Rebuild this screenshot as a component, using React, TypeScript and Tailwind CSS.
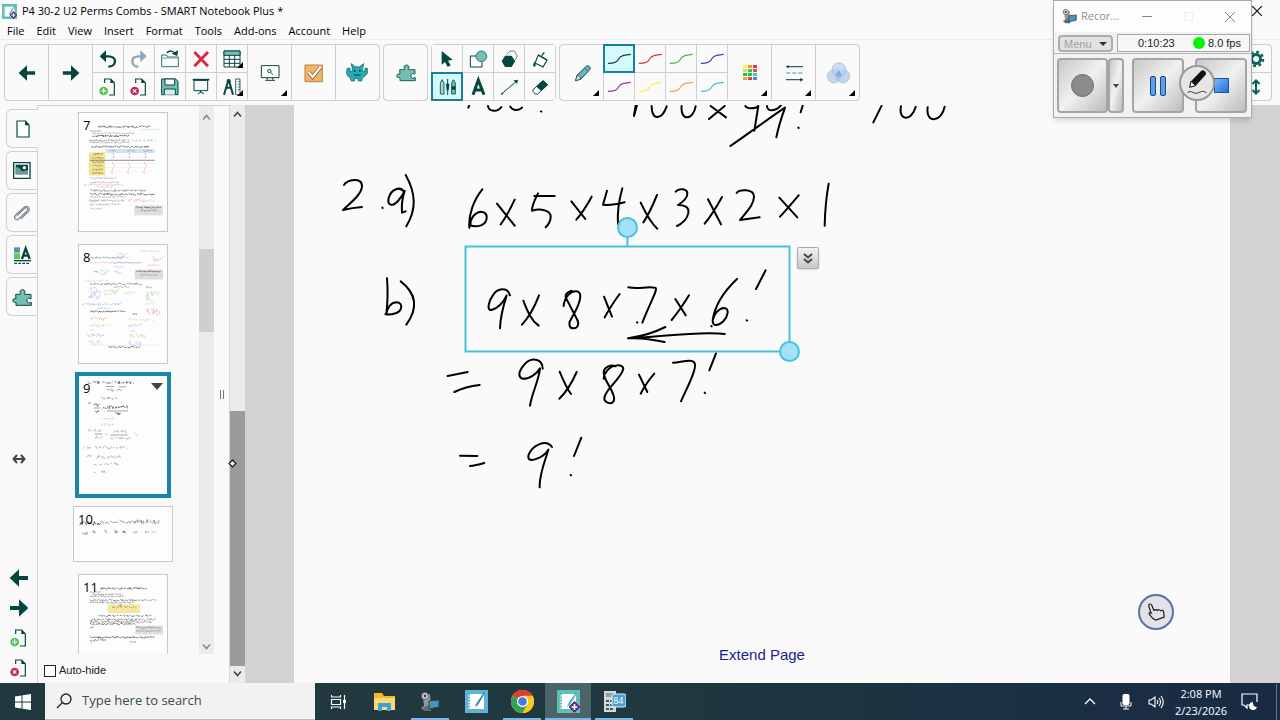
import type { ReactNode } from "react";

const DARK = "#05463f";
const TEAL = "#74beb6";

function Glyph({ cx, cy, r = 39, size = 26, children }: { cx: number; cy: number; r?: number; size?: number; children: ReactNode }) {
  return (
    <svg width={size} height={size} viewBox={`${cx - r} ${cy - r} ${r * 2} ${r * 2}`} fill="none" className="block shrink-0" aria-hidden="true">
      {children}
    </svg>
  );
}

function Corner() {
  return <span className="absolute right-1 bottom-1 h-0 w-0 border-b-[6px] border-l-[6px] border-b-black border-l-transparent" />;
}

function Tool({ label, children, active, corner, className = "" }: { label: string; children: ReactNode; active?: boolean; corner?: boolean; className?: string }) {
  return (
    <button
      type="button"
      aria-label={label}
      className={`relative flex items-center justify-center overflow-hidden ${active ? "z-10 bg-[#d5fafd] outline-2 -outline-offset-1 outline-[#1a7f9f]" : "bg-[#fafafa]"} ${className}`}
    >
      {children}
      {corner && <Corner />}
    </button>
  );
}

function Group({ children }: { children: ReactNode }) {
  return <div className="flex h-[57px] shrink-0 gap-px rounded border border-[#cfcfcf] bg-[#cfcfcf]">{children}</div>;
}

const BIG = "w-[43px] h-full first:rounded-l last:rounded-r";
const SMALL = "w-[30px]";

function PageIcon({ remove }: { remove?: boolean }) {
  return (
    <Glyph cx={324} cy={260}>
      <path d="M314 248v-12h18l11 12v36h-16" stroke={DARK} strokeWidth="3.5" />
      <path d="M331 235l13 13h-13z" fill={DARK} />
      <circle cx="311" cy="272" r="13" fill={remove ? "#c9284f" : "#4cc552"} />
      {remove ? <path d="M306 267l10 10M316 267l-10 10" stroke="#fff" strokeWidth="3.5" /> : <path d="M311 264v16M303 272h16" stroke="#fff" strokeWidth="3.5" />}
    </Glyph>
  );
}

function Arrow({ right, size = 20 }: { right?: boolean; size?: number }) {
  return (
    <svg width={size} height={size} viewBox="0 0 60 60" aria-hidden="true">
      <path d={right ? "M3 24h27V4l28 26-28 26V36H3z" : "M57 24H30V4L2 30l28 26V36h27z"} fill={DARK} />
    </svg>
  );
}

const PUZZLE = "M1194 209h14c2-3-2-5-1-9 1-6 13-7 15 0 1 4-3 6-1 9h19v13c-4 1-5-3-9-1-5 3-4 13 2 14 4 0 4-3 8-2v9h-46v-8c-3-3-7 1-9-4-2-6 3-10 9-8z";

function Pen({ color }: { color: string }) {
  return (
    <Glyph cx={600} cy={175}>
      <path d="M568 188c16 0 25-2 29-10 4-7 4-11 17-14l20-3" stroke={color} strokeWidth="3.6" strokeLinecap="round" />
    </Glyph>
  );
}

const pens: [string, string][] = [
  ["Black pen", "#26383a"], ["Red pen", "#d8303c"], ["Green pen", "#4db848"], ["Blue pen", "#4040c8"],
  ["Purple pen", "#923aa0"], ["Yellow pen", "#f5ef5c"], ["Orange pen", "#eea23c"], ["Light blue pen", "#4abbe0"],
];

const swatches = ["#f5f04d", "#f3923a", "#e23b3b", "#c6e850", "#3ac04b", "#e0544d", "#28c83a", "#2fbf45", "#49c9c4", "#f0a931", "#e4433a", "#3c8fd6"];

function Toolbar() {
  return (
    <div className="flex h-[65px] shrink-0 items-start gap-[3px] bg-[#f9f9f9] pt-1 pl-1">
      <Group>
        <Tool label="Previous page" className={BIG}><Arrow size={18} /></Tool>
        <Tool label="Next page" className={BIG}><Arrow right size={18} /></Tool>
        <div className="grid grid-cols-5 grid-rows-2 gap-px">
          <Tool label="Undo" className={SMALL}>
            <Glyph cx={324} cy={175}><path d="M305 167h20c12 0 20 6 20 15s-8 16-20 16" stroke={DARK} strokeWidth="7" /><path d="M299 167l19-18v36z" fill={DARK} /></Glyph>
          </Tool>
          <Tool label="Redo" className={SMALL}>
            <Glyph cx={417} cy={175}><path d="M432 167h-16c-12 0-19 6-19 15s7 16 18 16" stroke="#8fa7b8" strokeWidth="7" /><path d="M440 167l-19-18v36z" fill="#8fa7b8" /></Glyph>
          </Tool>
          <Tool label="Open" className={SMALL}>
            <Glyph cx={510} cy={175}><path d="M485 198v-35h14l5 6h31v29z" stroke="#2f7774" strokeWidth="3" /><path d="M485 172h50" stroke="#5aa7a1" strokeWidth="3" /><path d="M500 156c10-8 20-6 25 4" stroke={DARK} strokeWidth="4" /><path d="M515 159l17 7 2-17z" fill={DARK} /></Glyph>
          </Tool>
          <Tool label="Delete" className={SMALL}>
            <Glyph cx={602} cy={175}><path d="M582 154l41 43M623 154l-41 43" stroke="#d92b45" strokeWidth="9" /></Glyph>
          </Tool>
          <Tool label="Table" corner className={SMALL}>
            <Glyph cx={695} cy={175}><path d="M671 151h48v48h-48z" fill="#fff" stroke={DARK} strokeWidth="3" /><path d="M671 151h48v13h-48z" fill={TEAL} stroke={DARK} strokeWidth="3" /><path d="M671 176h48M671 188h48M687 164v35M703 164v35" stroke={DARK} strokeWidth="3" /></Glyph>
          </Tool>
          <Tool label="Add page" className={SMALL}><PageIcon /></Tool>
          <Tool label="Delete page" className={SMALL}><PageIcon remove /></Tool>
          <Tool label="Save" className={SMALL}>
            <Glyph cx={510} cy={260}><path d="M485 236h42l7 7v40h-49z" fill={TEAL} stroke={DARK} strokeWidth="3" /><path d="M495 236h29v18h-29z" fill="#fafafa" stroke={DARK} strokeWidth="3" /><path d="M493 283v-17h33v17" fill="#d8efec" stroke={DARK} strokeWidth="3" /></Glyph>
          </Tool>
          <Tool label="Screen shade" className={SMALL}>
            <Glyph cx={602} cy={260}><path d="M577 238h50" stroke={DARK} strokeWidth="5" /><path d="M581 240h41v31h-41zM601 271v7M592 281l9-6 10 6" stroke={DARK} strokeWidth="3" /></Glyph>
          </Tool>
          <Tool label="Measurement tools" corner className={SMALL}>
            <Glyph cx={695} cy={260}><path d="M685 237l-14 46M685 237l13 46M675 262h18" stroke={DARK} strokeWidth="6" /><circle cx="685" cy="243" r="6" fill={DARK} /><path d="M706 236h13v47h-13z" stroke={DARK} strokeWidth="2.5" /><path d="M712 244h7M712 252h7M712 260h7M712 268h7" stroke={DARK} strokeWidth="2" /></Glyph>
          </Tool>
        </div>
        <Tool label="Screen capture" corner className={BIG}>
          <Glyph cx={808} cy={217}><path d="M782 195h53v36h-53z" fill="#fff" stroke={DARK} strokeWidth="3" /><path d="M800 231v6M816 231v6M794 239h29" stroke={DARK} strokeWidth="3" /><circle cx="806" cy="211" r="5" stroke={DARK} strokeWidth="3" /><path d="M810 215l7 7" stroke={DARK} strokeWidth="3" /></Glyph>
        </Tool>
        <Tool label="Response" className={BIG}>
          <Glyph cx={941} cy={217}><path d="M914 193h52v50h-52z" fill="#f3b468" stroke="#b7823d" strokeWidth="3" /><path d="M925 215l12 14 23-29" stroke="#6f5a3c" strokeWidth="11" /><path d="M925 215l12 14 24-31" stroke="#fff" strokeWidth="7" /></Glyph>
        </Tool>
        <Tool label="Game activities" className={BIG}>
          <Glyph cx={1074} cy={219} r={36}><path d="M1044 206h8v9h6v-9l-3-13 12 9h11l12-9-3 13v9h6v-9h7v14l-8 9-5 2-3 10h-9l-2-7h-7l-2 7h-9l-3-10-5-2-5-9z" fill="#24adb0" stroke="#135e60" strokeWidth="2" /><path d="M1063 210h4v6h-4zM1077 210h4v6h-4zM1063 223h18v3h-18z" fill="#053d40" /></Glyph>
        </Tool>
      </Group>
      <Group>
        <Tool label="Add-ons" className={BIG}>
          <Glyph cx={1213} cy={219}><path d={PUZZLE} fill={TEAL} stroke={DARK} strokeWidth="2.5" /></Glyph>
        </Tool>
      </Group>
      <Group>
        <div className="grid grid-cols-4 grid-rows-2 gap-px">
          <Tool label="Select" className={SMALL}>
            <Glyph cx={82} cy={175}><path d="M66 151v41l10-8 8 15 9-5-8-14 14-3z" fill={DARK} /></Glyph>
          </Tool>
          <Tool label="Shapes" className={SMALL}>
            <Glyph cx={175} cy={175}><path d="M152 166h35v33h-35z" fill="#fff" stroke={DARK} strokeWidth="3" /><circle cx="185" cy="167" r="16" fill={TEAL} stroke="#2a7a76" strokeWidth="3" /></Glyph>
          </Tool>
          <Tool label="Regular polygons" className={SMALL}>
            <Glyph cx={268} cy={175}><path d="M261 162l10-11h13l9 15-8 14-6 7" stroke="#52716e" strokeWidth="2.5" /><path d="M256 165h20l10 17-10 17h-20l-10-17z" fill={DARK} /></Glyph>
          </Tool>
          <Tool label="Fill" className={SMALL}>
            <Glyph cx={361} cy={175}><path d="M356 163l26 15-12 21-24-12z" fill="#fff" stroke={DARK} strokeWidth="3.5" /><path d="M374 155l-8 10M356 163l26 15" stroke={DARK} strokeWidth="4" /><path d="M344 184c-4 7-6 12 0 14 6-1 5-7 0-14z" fill={DARK} /></Glyph>
          </Tool>
          <Tool label="Pens" active className={SMALL}>
            <Glyph cx={82} cy={260}><path d="M62 281v-33l5-10 6 10v33z" fill="#a7d6d3" stroke={DARK} strokeWidth="2.5" /><path d="M96 281v-33l5-10 6 10v33z" fill={TEAL} stroke={DARK} strokeWidth="2.5" /><path d="M84 236v17M84 262v22" stroke={DARK} strokeWidth="3" /><path d="M79 250h10l-2 20h-6zM96 258h11v10H96z" fill={DARK} /></Glyph>
          </Tool>
          <Tool label="Text" className={SMALL}>
            <Glyph cx={175} cy={262}><path d="M160 285l16-44 17 44M166 271h21" stroke={DARK} strokeWidth="9" /></Glyph>
          </Tool>
          <Tool label="Lines" className={SMALL}>
            <Glyph cx={268} cy={260}><path d="M247 280l44-38" stroke={DARK} strokeWidth="3" /><path d="M295 238l-13 2 10 11z" fill={DARK} /><circle cx="247" cy="280" r="3" fill={DARK} /></Glyph>
          </Tool>
          <Tool label="Eraser" className={SMALL}>
            <Glyph cx={361} cy={260}><path d="M340 268l30-27 14 12-30 28h-7l-7-7z" fill="#fff" stroke={DARK} strokeWidth="3" /><path d="M350 259l20-19 15 13-20 19z" fill={DARK} /></Glyph>
          </Tool>
        </div>
      </Group>
      <Group>
        <Tool label="Pen type" corner className={BIG}>
          <Glyph cx={488} cy={217}><path d="M469 240l4-16 29-28c4-3 14 4 10 10l-27 29z" fill="#6fb6b9" stroke={DARK} strokeWidth="3" /><path d="M473 224c6 1 10 5 11 11l-15 5zM495 202l10 9" fill="#d7e7e6" stroke={DARK} strokeWidth="2" /></Glyph>
        </Tool>
        <div className="grid grid-cols-4 grid-rows-2 gap-px">
          {pens.map(([name, color], i) => (
            <Tool key={name} label={name} active={i === 0} className={SMALL}><Pen color={color} /></Tool>
          ))}
        </div>
        <Tool label="Colours" corner className={BIG}>
          <span className="grid grid-cols-3 gap-px">
            {swatches.map((c, i) => <span key={i} className="h-[3px] w-1" style={{ background: c }} />)}
          </span>
        </Tool>
        <Tool label="Line style" corner className={BIG}>
          <Glyph cx={1122} cy={219}><path d="M1102 200h47M1098 239h47" stroke="#35605f" strokeWidth="3.5" /><path d="M1099 219h50" stroke="#5c8395" strokeWidth="3.5" strokeDasharray="12 6" /><path d="M1097 200l9-5v10zM1150 239l-9-6v12z" fill={DARK} /></Glyph>
        </Tool>
        <Tool label="Transparency" corner className={BIG}>
          <Glyph cx={1254} cy={217}><circle cx="1242" cy="227" r="20" fill="#b9cee6" fillOpacity=".8" stroke="#8eaac9" strokeWidth="1.5" /><circle cx="1269" cy="227" r="20" fill="#a8c5ec" fillOpacity=".7" stroke="#8eaac9" strokeWidth="1.5" /><circle cx="1257" cy="207" r="21" fill="#b4d1f5" fillOpacity=".75" stroke="#8eaac9" strokeWidth="1.5" /><path d="M1256 208l10 14-10 8-10-8z" fill="#6e9de0" fillOpacity=".7" /></Glyph>
        </Tool>
      </Group>
      <div className="mr-2 ml-auto">
        <Group>
          <div className="grid w-10 grid-rows-2 gap-px">
            <Tool label="Settings" className="justify-end rounded-tr pr-[6px]">
              <svg width="18" height="18" viewBox="0 0 18 18" aria-hidden="true"><circle cx="9" cy="9" r="4.5" fill="none" stroke="#0f5f5a" strokeWidth="3" /><circle cx="9" cy="9" r="7" fill="none" stroke="#0f5f5a" strokeWidth="2.5" strokeDasharray="2.8 2.7" /></svg>
            </Tool>
            <Tool label="Move toolbar" className="justify-end rounded-br pr-[6px]">
              <svg width="18" height="18" viewBox="0 0 18 18" fill="none" stroke="#0f5f5a" strokeWidth="2" aria-hidden="true"><path d="M9 3v12M5.5 6L9 2.5 12.5 6M5.5 12L9 15.5l3.5-3.5" /></svg>
            </Tool>
          </div>
        </Group>
      </div>
    </div>
  );
}

function Tab({ label, active, children }: { label: string; active?: boolean; children: ReactNode }) {
  return (
    <button type="button" aria-label={label} className={`relative flex h-[39px] items-center justify-center rounded-l-md border border-r-0 border-[#d0d0d0] bg-[#fafafa] ${active ? "z-10 w-8" : "w-[31px]"}`}>
      {children}
    </button>
  );
}

function SideTabs() {
  return (
    <nav className="flex w-[38px] shrink-0 flex-col border-r border-[#d4d4d4] bg-[#f9f9f9] pt-1">
      <div className="ml-[6px] flex flex-col gap-[3px]">
        <Tab label="Page sorter" active>
          <Glyph cx={68} cy={70}><path d="M50 46h25l11 12v36H50z" fill="#fff" stroke={DARK} strokeWidth="3.5" /><path d="M74 44l14 15H74z" fill={DARK} /></Glyph>
        </Tab>
        <Tab label="Gallery">
          <Glyph cx={68} cy={198}><path d="M43 173h49v47H43z" fill="#fff" stroke={DARK} strokeWidth="4" /><path d="M49 179h37v29H49z" fill={DARK} /><path d="M49 186c12 0 16 10 20 13l17-4v13H49z" fill="#6b9a98" /><circle cx="75" cy="188" r="5" fill="#fff" /></Glyph>
        </Tab>
        <Tab label="Attachments">
          <Glyph cx={66} cy={322}><path d="M52 329l22-21c7-5 12 2 7 8l-25 24c-8 6-17-3-9-12l25-23c10-8 21 2 13 13l-21 21" stroke="#75858a" strokeWidth="3.5" strokeLinecap="round" /></Glyph>
        </Tab>
        <Tab label="Properties">
          <Glyph cx={66} cy={449}><path d="M42 426h18v16H42z" fill="#5c93a8" /><path d="M42 444h18v17H42z" fill="#58cf4f" /><path d="M66 461l11-32 12 32M70 451h14" stroke={DARK} strokeWidth="7" /><path d="M42 466h51" stroke={DARK} strokeWidth="4" /><path d="M43 474h48" stroke={DARK} strokeWidth="4" strokeDasharray="8 4" /></Glyph>
        </Tab>
        <Tab label="Add-ons">
          <Glyph cx={1213} cy={217}><path d={PUZZLE} fill={TEAL} stroke={DARK} strokeWidth="3" /></Glyph>
        </Tab>
      </div>
      <button type="button" aria-label="Move panel" className="mt-auto mb-[99px] flex w-full justify-center">
        <svg width="14" height="10" viewBox="0 0 14 10" fill="none" stroke="#444" strokeWidth="2" aria-hidden="true"><path d="M2 5h10M5 1L1.500 5 5 9M9 1l3.500 4L9 9" /></svg>
      </button>
      <div className="grid w-full auto-rows-[30px] place-items-center">
        <button type="button" aria-label="Back"><Arrow size={20} /></button>
        <button type="button" aria-label="Forward"><Arrow right size={20} /></button>
        <button type="button" aria-label="Insert page"><PageIcon /></button>
        <button type="button" aria-label="Remove page"><PageIcon remove /></button>
      </div>
    </nav>
  );
}

/* x, y, length, colour, height of the scribble, then how airy it is */
type Row = [number, number, number, string, number?, number?];

function scribble(x: number, y: number, w: number, h: number, gap: number, seed: number) {
  let s = seed * 7919 + 17;
  const next = () => {
    s = (s * 1103515245 + 12345) % 2147483648;
    return s / 2147483648;
  };
  let d = "";
  let px = x;
  while (px < x + w) {
    d += `M${px.toFixed(1)} ${(y + (next() - 0.5) * h).toFixed(1)}`;
    const parts = 2 + Math.floor(next() * 4);
    for (let i = 0; i < parts && px < x + w; i++) {
      px += 1 + next() * 2.5;
      d += `L${px.toFixed(1)} ${(y + (next() - 0.5) * h).toFixed(1)}`;
    }
    px += gap * (0.5 + next());
  }
  return d;
}

function Rows({ rows }: { rows: Row[] }) {
  return (
    <g fill="none" strokeWidth="2">
      {rows.map(([x, y, w, c, h = 3, gap = 2], i) => (
        <path key={i} d={scribble(x, y, w, h, gap, x + y)} stroke={c} />
      ))}
    </g>
  );
}

const G = "#6d6d6d", K = "#333333", R = "#ecaab0", B = "#b3b5ea", N = "#b5e2b4";

const page7: Row[] = [
  [292, 64, 158, K, 6], [420, 73, 60, "#a8e0a8", 6], [268, 77, 34, G, 3], [275, 84, 130, "#999", 4], [275, 92, 110, K, 6], [268, 106, 110, G, 6], [382, 106, 85, "#8ab98a", 5, 5], [268, 112, 118, "#888", 5], [272, 125, 175, K, 6],
  [268, 220, 80, "#999", 4], [268, 233, 88, "#999", 5], [250, 240, 118, R, 4], [290, 247, 45, R, 8], [268, 258, 168, G, 6], [268, 269, 196, K, 6], [268, 277, 110, "#999", 4], [268, 288, 105, "#999", 6], [264, 290, 20, R, 9], [386, 288, 78, R, 9], [268, 300, 88, "#999", 5], [268, 312, 34, "#aaa", 5],
];
const page8: Row[] = [
  [270, 456, 100, G, 5], [350, 443, 30, B, 12], [350, 454, 34, B, 7], [420, 436, 60, N, 6], [460, 460, 28, "#cfa6e6", 18], [270, 471, 150, R, 5], [330, 471, 95, B, 6], [440, 479, 40, R, 5], [340, 484, 28, R, 4],
  [280, 500, 14, G, 6], [300, 494, 26, N, 12], [298, 506, 22, N, 14], [342, 500, 22, "#bbb", 16], [252, 526, 75, N, 4], [268, 536, 155, G, 6], [340, 545, 45, "#999", 5], [438, 545, 18, G, 7], [268, 548, 16, "#aaa", 4],
  [265, 560, 36, B, 18], [265, 574, 34, B, 16], [312, 556, 42, N, 10], [312, 566, 42, N, 20], [374, 563, 30, N, 8], [440, 566, 36, N, 18], [440, 580, 22, N, 22], [244, 597, 118, B, 8],
];
const page8Lower: Row[] = [
  [290, 609, 38, B, 4], [270, 619, 105, K, 5], [398, 626, 10, K, 7], [436, 597, 25, N, 8], [440, 621, 40, R, 20], [268, 642, 52, R, 12], [386, 644, 74, N, 8], [268, 662, 60, N, 7], [384, 662, 40, B, 9], [268, 677, 12, B, 5], [390, 677, 14, B, 5], [260, 691, 52, B, 12], [390, 693, 48, N, 14], [262, 714, 46, N, 16], [384, 716, 38, B, 16], [324, 727, 94, K, 5],
];
const page9: Row[] = [
  [264, 248, 10, G, 12], [280, 246, 18, K, 9, 3], [308, 246, 8, K, 5, 4], [320, 246, 82, K, 9, 4], [322, 269, 18, G, 8], [352, 269, 20, G, 8, 7],
  [305, 293, 46, G, 8, 4], [264, 311, 10, G, 10], [282, 314, 18, K, 9], [286, 333, 12, K, 9], [308, 323, 10, K, 5], [322, 321, 62, K, 10, 3], [346, 341, 14, K, 8],
  [304, 355, 46, "#b9b9e4", 8, 4], [304, 374, 36, "#bbb", 8, 5], [264, 390, 14, "#bbb", 10], [284, 392, 22, "#aaa", 10, 3], [286, 412, 20, "#bbb", 10], [315, 402, 8, "#bbb", 5], [342, 395, 36, "#999", 10, 3], [334, 415, 56, "#aaa", 9, 3], [404, 404, 16, "#bbb", 16, 4],
  [250, 443, 28, "#aaa", 9, 5], [286, 443, 96, "#999", 9, 5], [260, 470, 12, "#999", 10], [290, 472, 74, "#999", 11, 5], [282, 495, 8, "#999", 5], [298, 494, 60, "#999", 11, 5], [282, 517, 8, "#aaa", 5], [302, 517, 12, "#aaa", 10],
];
const page10: Row[] = [
  [236, 70, 64, K, 13, 3], [300, 68, 34, G, 12, 3], [338, 66, 12, G, 8], [358, 65, 120, G, 14, 3],
  [242, 100, 16, G, 10], [274, 98, 7, G, 11], [313, 96, 7, K, 11], [342, 95, 8, G, 12], [368, 98, 7, K, 10], [400, 96, 10, G, 10], [437, 96, 9, G, 10], [458, 97, 18, "#aaa", 2, 10],
];
const page11: Row[] = [
  [300, 263, 140, K, 7], [268, 274, 32, G, 4], [276, 281, 86, G, 4], [268, 287, 102, G, 4], [268, 299, 200, G, 6], [268, 306, 134, G, 6], [336, 320, 72, "#9a8f52", 6, 4], [356, 315, 8, K, 6], [294, 346, 158, K, 5, 4],
  [268, 358, 200, G, 7], [268, 365, 190, G, 6], [268, 371, 138, K, 5], [268, 383, 10, G, 4], [408, 382, 76, G, 5], [408, 392, 76, "#888", 4], [268, 412, 194, K, 6], [268, 420, 48, G, 6], [272, 425, 10, G, 5], [390, 425, 16, G, 6],
];

function Thumb({ n, box, className, children }: { n: number; box: string; className: string; children: ReactNode }) {
  return (
    <button type="button" aria-label={`Page ${n}`} className={`relative block shrink-0 bg-[#fdfdfd] ${className}`}>
      <svg viewBox={box} className="block h-full w-full" aria-hidden="true">{children}</svg>
      <span className="absolute top-1 left-1 text-[13px] leading-4 text-black">{n}</span>
    </button>
  );
}

function PageSorter() {
  return (
    <aside className="flex w-[191px] shrink-0 flex-col border-t border-[#cfcfcf] bg-[#f9f9f9]">
      <div className="flex min-h-0 flex-1">
        <div className="flex h-full w-[161px] flex-col items-center overflow-hidden pt-[6px] pl-[9px]">
          <Thumb n={7} box="235 23 267 357" className="mb-3 h-[120px] w-[90px] border border-[#c8c8c8]">
            <path d="M315 132h149v12H315z" fill="#cfe3f0" />
            <path d="M265 142h49v70h-49z" fill="#f3e393" />
            <path d="M268 166h197" stroke="#777" strokeWidth="2.5" />
            <path d="M314 156h150M314 176h150M314 188h150M314 200h150" stroke="#e6e6e6" />
            <Rows rows={page7} />
            <Rows rows={[[328, 137, 20, "#7f98a8", 5], [380, 137, 24, "#7f98a8", 5], [430, 137, 24, "#7f98a8", 5], [278, 147, 30, "#6f6430", 5], [274, 159, 34, "#6f6430", 5], [276, 171, 34, "#6f6430", 5], [276, 182, 32, "#8a7c40", 5], [276, 194, 32, "#8a7c40", 5], [274, 205, 34, "#6f6430", 5]]} />
            {[338, 386, 435].map((x) => <path key={x} d={`M${x} 144q6 8 0 16t0 16t0 16t0 16`} fill="none" stroke="#ef9aa2" strokeWidth="3" strokeDasharray="6 4" />)}
            <path d="M403 303h86v30h-86z" fill="#dedede" />
            <Rows rows={[[407, 309, 76, "#444", 5], [422, 319, 48, "#666", 5]]} />
          </Thumb>
          <Thumb n={8} box="235 418 267 357" className="mb-2 h-[120px] w-[90px] border border-[#c8c8c8]">
            <path d="M404 492h86v30h-86z" fill="#dedede" />
            <Rows rows={[[408, 498, 74, "#444", 5], [420, 508, 52, "#888", 5]]} />
            <Rows rows={page8} />
            <Rows rows={page8Lower} />
            <path d="M262 721h212" stroke="#c9dcc9" />
          </Thumb>
          <div className="relative mb-2 shrink-0">
            <Thumb n={9} box="237 227 267 356" className="h-[126px] w-24 border-4 border-[#1a84ab]">
              <Rows rows={page9} />
              <path d="M318 258h26M358 259h22M282 323h20M322 332h64M284 402h24M332 405h52" stroke="#777" strokeWidth="2" />
            </Thumb>
            <svg width="12" height="7" viewBox="0 0 12 7" className="absolute top-[11px] right-2" aria-hidden="true"><path d="M0 0h12L6 7z" fill="#444" /></svg>
          </div>
          <Thumb n={10} box="220 20 297 166" className="mb-3 h-14 w-[100px] border border-[#c8c8c8]">
            <Rows rows={page10} />
          </Thumb>
          <Thumb n={11} box="235 223 267 357" className="h-[120px] w-[90px] border border-[#c8c8c8]">
            <path d="M322 311h98v27h-98z" fill="#f5e6a1" />
            <path d="M406 376h84v27h-84z" fill="#dedede" />
            <Rows rows={page11} />
          </Thumb>
        </div>
        <div className="flex w-[15px] shrink-0 flex-col items-center bg-[#ebebeb] pt-2 pb-1">
          <Chevron up color="#8a8a8a" />
          <div className="mt-[128px] h-[83px] w-full bg-[#cfcfcf]" />
          <div className="mt-auto"><Chevron color="#8a8a8a" /></div>
        </div>
        <div className="flex flex-1 items-center justify-center">
          <span className="mt-7 h-[9px] w-1 border-x border-[#777]" />
        </div>
      </div>
      <label className="flex h-[29px] items-center gap-[3px] pt-1 pl-[6px] font-['Liberation_Sans',sans-serif] text-[11px] text-[#222]">
        <input type="checkbox" className="h-3 w-3 appearance-none border border-[#222] bg-white" />
        Auto-hide
      </label>
    </aside>
  );
}

function Chevron({ up, color }: { up?: boolean; color: string }) {
  return (
    <svg width="9" height="7" viewBox="0 0 9 7" fill="none" stroke={color} strokeWidth="1.6" className="block shrink-0" aria-hidden="true">
      <path d={up ? "M1 5.500l3.500-4 3.500 4" : "M1 1.500l3.500 4 3.500-4"} />
    </svg>
  );
}

function PageInk() {
  return (
    <svg viewBox="294 105 936 578" className="block h-[578px] w-[936px] max-w-none" role="img" aria-label="2. a) 6×5×4×3×2×1  b) 9×8×7×6! = 9×8×7! = 9!">
      <g fill="none" stroke="#000" strokeWidth="6" strokeLinecap="round" strokeLinejoin="round">
        <g transform="translate(330 100) scale(.33333)">
          <path d="M418 15l-3 8M474 18c2 17 28 20 40 3M541 20c6 12 25 13 35 3M633 34l1 1M921 15l-9 32" />
          <path d="M42 255c6-16 55-26 54 4-1 25-36 50-57 71 12-3 30-7 57-9M157 323l1 1" />
          <path d="M222 275c-12-17-38-9-46 19-5 22 11 28 28 9 10-11 17-23 20-31-6 19-10 42-8 66l11-4M227 225c32 57 32 104 2 154" />
          <path d="M457 268c-24 29-42 73-39 115M421 377c-1-23 14-40 31-42 25 1 23 32 1 41-12 4-23 4-34-1M501 311l53 66M554 299c-13 28-25 52-42 74" />
          <path d="M674 288h-61M624 280c-10 20-19 37-18 52 25-7 58-2 56 20-1 14-8 23-15 30M724 304l42 53M785 290c-13 24-27 47-46 69" />
          <path d="M831 272l-12 42c14 3 41-1 65-7M877 265c-11 39-15 77-13 107" />
          <path d="M171 535c3 35 2 71-2 108 2-20 14-36 31-36 20 1 17 25-1 32-12 4-24 7-33 3M212 544c51 39 50 84 17 130" />
          <path d="M540 586c-8-25-37-23-52 1-15 21-17 46-3 43 20-6 35-23 45-44-12 37-19 69-20 99M580 602c13 34 24 59 46 75M627 586c-13 34-28 63-51 88" />
          <path d="M725 572c-13 2-22 14-16 24l32 62c9 16 0 27-10 27-14 1-17-16-7-29 10-20 27-43 27-68-1-17-20-19-35-4-9 9-14 20-15 34M822 590l24 60M869 582c-16 21-31 45-45 70" />
        </g>
        <g transform="translate(620 100) scale(.33333)">
          <path d="M47 16l-5 31M95 18c-1 44 30 44 45 1M185 18c-5 45 34 45 42 1M272 18l46 34M314 18l-47 39M376 18c5 9 31 9 39 0l-12 74M441 18c1 20 27 15 42-2M331 138c51-34 105-76 164-115-11 31-20 59-26 89M548 17l-6 20M535 83l1 1M785 17l-25 50M843 19c-9 43 31 48 44 1M923 22c-7 50 42 46 51-2" />
          <path d="M62 308c17 36 31 62 50 78M111 285c-13 32-25 59-41 82M167 275c11-13 36-8 35 7-1 14-15 25-28 33 18 0 34 5 31 24-2 17-20 33-34 39M264 298l39 75M306 291c-16 29-32 56-52 80" />
          <path d="M350 279c8-11 50-14 52 10 1 25-24 48-42 71l59-8M478 293l54 59M536 286c-20 23-37 44-56 64M626 251c-7 39-11 82-12 126" />
          <path d="M25 562c29 6 54-3 80 1 11 1-10 35-38 105M51 667l1 1M166 597l31 49M207 586c-16 26-31 49-52 74M351 537c-38 36-67 80-73 124 4-19 18-36 34-37 18 0 11 27-2 40-14 13-32 17-32-2M274 678l1 1M437 511l-29 56M380 661l1 1" />
          <path d="M314 702c-75-11-205 11-290 13 43-6 84-20 112-34M24 715c43-3 83 5 110 11" />
        </g>
        <g transform="translate(430 320) scale(.33333)">
          <path d="M53 168l60-12M73 216c25-12 50-18 76-21M338 146c-1-32-36-36-57-10-23 28-12 45 10 39 16-5 28-13 39-30-3 35-24 73-30 112M389 155c11 27 21 50 34 67M440 156c-14 32-30 59-52 80" />
          <path d="M557 139c-14-6-36 2-36 19 2 30 36 57 31 83-7 16-30 7-29-8 3-26 53-59 57-87-1-17-34-11-48 5-7 8-11 15-11 25M627 164l25 52M673 161c-18 20-31 41-41 60M729 128c26-1 62-15 66 5 4 21-26 73-42 111M858 100l-20 51M824 218l1 1" />
          <path d="M90 407l52 1M120 438c14-1 29-5 43-9M366 381c-18-25-58-6-70 23-5 19 10 18 25 12 15-6 28-17 34-27-10 35-28 76-26 113M454 353l-22 55M422 465l1 1" />
        </g>
      </g>
      <g stroke="#45c3dc" strokeWidth="2">
        <path d="M465.500 246.500h324v105h-324zM627.500 237v9" fill="none" />
        <circle cx="627.500" cy="227.500" r="9.500" fill="#a4e1f9" />
        <circle cx="789.500" cy="351.500" r="9.500" fill="#a4e1f9" />
      </g>
    </svg>
  );
}

function Canvas() {
  return (
    <main className="flex min-w-0 flex-1 bg-[#d2d2d2] pr-[50px] pl-[49px]">
      <div className="relative min-w-0 flex-1 overflow-hidden bg-[#fafafa]">
        <PageInk />
        <button type="button" aria-label="Object menu" className="absolute top-[142px] left-[503px] flex h-[22px] w-[22px] items-center justify-center rounded-xs border border-[#aaa] bg-linear-to-b from-[#f2f2f2] to-[#c8c8c8] shadow-sm">
          <svg width="10" height="11" viewBox="0 0 10 11" fill="none" stroke="#444" strokeWidth="2" aria-hidden="true"><path d="M1 1l4 3.500L9 1M1 6l4 3.500L9 6" /></svg>
        </button>
        <a href="#extend" className="absolute inset-x-0 bottom-4 mx-auto w-max font-['Liberation_Sans',sans-serif] text-[15px] leading-6 text-[#1c1c94]">Extend Page</a>
        <button type="button" aria-label="Touch mode" className="absolute right-14 bottom-[53px] flex h-9 w-9 items-center justify-center rounded-full border-2 border-[#5a6db0] bg-[#e2e3e6]">
          <svg width="20" height="20" viewBox="0 0 66 66" fill="none" stroke="#222" strokeWidth="4" strokeLinejoin="round" aria-hidden="true"><path d="M17 37L9 13c-1-7 8-9 10-2l7 17c4-4 8-3 11 0 4-4 8-3 11 1 5-3 9-2 10 3l2 18-28 10c-8-3-14-9-21-19-3-6 3-9 8-3z" /></svg>
        </button>
      </div>
    </main>
  );
}

function CameraIcon({ size }: { size: number }) {
  return (
    <svg width={size} height={size} viewBox="0 0 20 20" className="block" aria-hidden="true">
      <path d="M3 5l7-3 1 12-6 5-4-3 3-2z" fill="#8d979b" /><circle cx="5" cy="4" r="3.5" fill="#d4d8d9" stroke="#59666b" /><circle cx="5" cy="4" r="1.4" fill="#39464a" />
      <path d="M2 17l4-3h5v5H5z" fill="#5f6c71" /><path d="M9 9l10-1v7L9 17z" fill="#4795bd" stroke="#31434b" />
    </svg>
  );
}

const metal = "flex items-center justify-center rounded border-2 border-[#a5a5a5] bg-linear-to-br from-[#c9c9c9] via-[#f1f1f1] to-[#bdbdbd]";

function Recorder() {
  return (
    <section aria-label="Recorder" className="absolute top-0 right-7 z-20 flex w-[199px] flex-col border border-[#aaa] bg-[#f2f2f2] font-['Liberation_Sans',sans-serif] shadow-md">
      <header className="flex h-[31px] items-center bg-[#fdfdfd] px-2 text-[#8f8f8f]">
        <CameraIcon size={15} />
        <span className="ml-1 font-['Open_Sans',sans-serif] text-[11px]">Recor...</span>
        <div className="ml-auto flex items-center gap-8 pr-2">
          <button type="button" aria-label="Minimize" className="flex h-3 w-[10px] items-center"><span className="h-px w-full bg-[#888]" /></button>
          <button type="button" aria-label="Maximize" className="h-[9px] w-[9px] border border-[#f0f0f0]" />
          <button type="button" aria-label="Close recorder"><svg width="10" height="10" viewBox="0 0 10 10" stroke="#888" aria-hidden="true"><path d="M0 0l10 10M10 0L0 10" /></svg></button>
        </div>
      </header>
      <div className="flex h-[22px] items-start gap-1 border-b border-[#b5b5b5] pt-[2px] pr-px pl-1">
        <button type="button" className="mt-px flex h-[17px] w-[55px] items-center justify-between rounded border-2 border-[#adadad] bg-[#e2e2e2] px-1 text-[11px] leading-3 text-[#a0a0a0]">
          Menu<span className="h-0 w-0 border-x-4 border-t-4 border-x-transparent border-t-[#333]" />
        </button>
        <div className="flex h-[18px] flex-1 items-center justify-between border border-[#a6a6a6] bg-[#f7f7f7] pr-2 pl-5 text-[11px] text-[#222]">
          <span>0:10:23</span>
          <span className="flex items-center gap-[3px]"><span className="h-3 w-3 rounded-full bg-[#05f505]" />8.0 fps</span>
        </div>
      </div>
      <div className="relative flex h-[63px] items-start pt-1 pl-[3px]">
        <button type="button" aria-label="Record" className={`${metal} h-[55px] w-[51px]`}><span className="h-[23px] w-[23px] rounded-full border border-[#6e6e6e] bg-[#8b8b8b]" /></button>
        <button type="button" aria-label="Record options" className={`${metal} h-[55px] w-4`}><span className="h-0 w-0 border-x-[3px] border-t-4 border-x-transparent border-t-[#444]" /></button>
        <button type="button" aria-label="Pause" className={`${metal} ml-2 h-[55px] w-[52px] gap-1`}><span className="h-5 w-[6px] rounded-xs border border-[#1b4a8a] bg-[#5b9fe4]" /><span className="h-5 w-[6px] rounded-xs border border-[#1b4a8a] bg-[#5b9fe4]" /></button>
        <button type="button" aria-label="Stop" className={`${metal} ml-[11px] h-[55px] w-[52px]`}><span className="h-[15px] w-[15px] border border-[#1d55a5] bg-linear-to-br from-[#7bb9f3] to-[#1b6fd8]" /></button>
        <div className="absolute top-[11px] left-[125px] flex h-9 w-9 items-center justify-center rounded-full border-2 border-[#999] bg-[#e6e6e6]">
          <svg width="24" height="26" viewBox="0 0 72 78" aria-hidden="true"><path d="M14 52l4-18L49 2c6-4 17 5 13 12L32 47z" fill="#111" /><path d="M14 52l4-18 14 13z" fill="#fff" stroke="#111" strokeWidth="3" /><path d="M8 68c12-10 18 6 30 1s16-8 27 0" fill="none" stroke="#333" strokeWidth="3" /></svg>
        </div>
      </div>
    </section>
  );
}

function NotebookIcon({ plus, size = 23 }: { plus?: boolean; size?: number }) {
  return (
    <svg width={size} height={size} viewBox="0 0 23 23" className="block" aria-hidden="true">
      <path d="M0 0h23v23H0z" fill={plus ? "#62bfb6" : "#5fb3d3"} /><path d="M5 4h14v15H5z" fill="#fff" />
      <path d="M3 6h3M3 9h3M3 12h3M3 15h3M3 18h3" stroke="#fff" strokeWidth="1.2" /><path d="M19 2L11 14l-1 3 3-2 7-12z" fill={plus ? "#5aaeb4" : "#3f87ac"} />
      {plus && <g><path d="M17.500 11.500L23 17l-5.500 5.500L12 17z" fill="#59307f" stroke="#59307f" /><path d="M17.500 14v6M14.500 17h6" stroke="#fff" strokeWidth="1.6" /></g>}
    </svg>
  );
}

function TaskItem({ label, open, active, children }: { label: string; open?: boolean; active?: boolean; children: ReactNode }) {
  return (
    <button type="button" aria-label={label} className={`relative flex h-full w-[46px] items-center justify-center ${active ? "bg-[#4b6468]" : ""}`}>
      {children}
      {open && <span className={`absolute bottom-0 h-[2px] bg-[#7ab8ea] ${active ? "inset-x-0" : "inset-x-1"}`} />}
    </button>
  );
}

function Taskbar() {
  return (
    <footer className="flex h-[37px] shrink-0 items-stretch bg-linear-to-r from-[#21393e] via-[#20383f] to-[#192a44] text-white">
      <button type="button" aria-label="Start" className="flex w-[45px] items-center justify-center">
        <svg width="16" height="16" viewBox="0 0 16 16" fill="#fff" aria-hidden="true"><path d="M0 2.500l6.500-1v6H0zM7.500 1.300L16 0v7.500H7.500zM0 8.500h6.500v6L0 13.500zM7.500 8.500H16V16l-8.500-1.300z" /></svg>
      </button>
      <div className="flex w-[270px] items-center gap-[10px] border-b border-[#bbb] bg-[#f2f2f2] pl-[11px]">
        <svg width="16" height="16" viewBox="0 0 16 16" fill="none" stroke="#222" strokeWidth="1.3" aria-hidden="true"><circle cx="10" cy="6" r="5" /><path d="M6.500 9.500L1 15" /></svg>
        <input aria-label="Search" placeholder="Type here to search" className="min-w-0 flex-1 bg-transparent text-[13px] text-[#333] outline-none placeholder:text-[#3c4a54]" />
      </div>
      <TaskItem label="Task view">
        <svg width="16" height="16" viewBox="0 0 16 16" fill="none" stroke="#fff" aria-hidden="true"><path d="M1.500 5.500h9v5h-9zM1.500 1v2h9V1M1.500 15v-2h9v2M14.500 1v14" strokeWidth="1.2" /><path d="M13 6h3v3h-3z" fill="#fff" stroke="none" /></svg>
      </TaskItem>
      <TaskItem label="File Explorer">
        <svg width="21" height="19" viewBox="0 0 21 19" aria-hidden="true"><path d="M0 1h8l2 3h11v14H0z" fill="#f2b92f" /><path d="M0 6h21v12H0z" fill="#fadb72" /><path d="M4 19v-8h13v8h-4v-4H8v4z" fill="#3f9fdc" /></svg>
      </TaskItem>
      <TaskItem label="Recorder" open><CameraIcon size={20} /></TaskItem>
      <TaskItem label="SMART Ink"><NotebookIcon /></TaskItem>
      <TaskItem label="Chrome" open>
        <svg width="23" height="23" viewBox="0 0 24 24" aria-hidden="true"><circle cx="12" cy="12" r="12" fill="#f9c91f" /><path d="M12 12L1.600 6A12 12 0 0 1 22.400 6z" fill="#e23c31" /><path d="M12 12L1.600 6A12 12 0 0 0 12 24l5-9z" fill="#34a350" /><path d="M12 6h10.400A12 12 0 0 1 12 24l5.500-9z" fill="#f9c91f" /><circle cx="12" cy="12" r="5.8" fill="#fff" /><circle cx="12" cy="12" r="4.5" fill="#3b7de0" /></svg>
      </TaskItem>
      <TaskItem label="SMART Notebook Plus" open active><NotebookIcon plus /></TaskItem>
      <TaskItem label="Calculator" open>
        <span className="relative block">
          <svg width="23" height="23" viewBox="0 0 23 23" aria-hidden="true"><path d="M1 1h12v21H1z" fill="#d4d8da" /><path d="M3 3h8v4H3z" fill="#8fa0a5" /><path d="M3 10h3v2H3zM7 10h3v2H7zM3 14h3v2H3zM7 14h3v2H7zM3 18h3v2H3zM7 18h3v2H7z" fill="#49575b" /><rect x="9" y="4" width="14" height="13" rx="2" fill="#4aa0cf" stroke="#e8f4fb" /></svg>
          <span className="absolute top-[6px] right-[2px] text-[9px] leading-[9px]">84</span>
        </span>
      </TaskItem>
      <div className="ml-auto flex items-center">
        <button type="button" aria-label="Hidden icons" className="mr-6"><svg width="12" height="7" viewBox="0 0 12 7" fill="none" stroke="#fff" strokeWidth="1.3" aria-hidden="true"><path d="M1 6l5-5 5 5" /></svg></button>
        <button type="button" aria-label="Microphone" className="mr-4"><svg width="12" height="16" viewBox="0 0 12 16" fill="none" stroke="#fff" aria-hidden="true"><rect x="3" y="0.5" width="6" height="10" rx="1" fill="#fff" /><path d="M1 8v4h10V8M6 12v3M3 15h6" /></svg></button>
        <button type="button" aria-label="Volume" className="mr-3"><svg width="16" height="14" viewBox="0 0 16 14" fill="none" stroke="#fff" strokeWidth="1.1" aria-hidden="true"><path d="M1 5v4h2l4 3V2L3 5zM9 5q1.500 2 0 4M11 3q3 4 0 8M13 1q4.500 6 0 12" /></svg></button>
        <button type="button" className="flex w-[50px] flex-col items-center text-[11px] leading-[17px] whitespace-nowrap"><span>2:08 PM</span><span>2/23/2026</span></button>
        <button type="button" aria-label="Notifications" className="mr-[18px] ml-[15px]"><svg width="17" height="17" viewBox="0 0 17 17" fill="none" stroke="#fff" strokeWidth="1.2" aria-hidden="true"><path d="M10 12H6v3l-3-3H1V1h15v8" /><path d="M12 9a4 4 0 1 0 4 5 4 4 0 0 1-4-5z" fill="#fff" stroke="none" /></svg></button>
        <span className="h-9 w-1 border-l border-[#6b7685]" />
      </div>
    </footer>
  );
}

const menus = ["File", "Edit", "View", "Insert", "Format", "Tools", "Add-ons", "Account", "Help"];

export default function App() {
  return (
    <div className="relative flex h-screen flex-col overflow-hidden bg-[#fafafa] font-['Open_Sans','Noto_Sans',sans-serif] text-black">
      <header className="flex h-[22px] shrink-0 items-center gap-[5px] pl-[2px] text-[11px]">
        <NotebookIcon plus size={15} />
        <h1>P4 30-2 U2 Perms Combs - SMART Notebook Plus *</h1>
        <button type="button" aria-label="Close" className="mr-[18px] ml-auto"><svg width="10" height="10" viewBox="0 0 10 10" stroke="#111" strokeWidth="1.2" aria-hidden="true"><path d="M0 0l10 10M10 0L0 10" /></svg></button>
      </header>
      <nav className="flex h-[18px] shrink-0 items-center gap-3 border-b border-[#ececec] pl-[7px] text-[11px] leading-4">
        {menus.map((m) => <button type="button" key={m}>{m}</button>)}
      </nav>
      <Toolbar />
      <div className="flex min-h-0 flex-1">
        <SideTabs />
        <PageSorter />
        <div className="relative flex w-4 shrink-0 flex-col items-center border-l border-[#d6d6d6] bg-[#ebebeb] pt-[6px] pb-[6px]">
          <Chevron up color="#444" />
          <div className="mt-auto mb-1 h-[255px] w-full bg-[#9b9b9b]" />
          <Chevron color="#444" />
          <svg width="9" height="9" viewBox="0 0 9 9" className="absolute bottom-[215px] -left-[2px]" aria-hidden="true"><path d="M4.500 1L8 4.500 4.500 8 1 4.500z" fill="#fff" stroke="#111" strokeWidth="1.2" /></svg>
        </div>
        <Canvas />
      </div>
      <Taskbar />
      <Recorder />
    </div>
  );
}
